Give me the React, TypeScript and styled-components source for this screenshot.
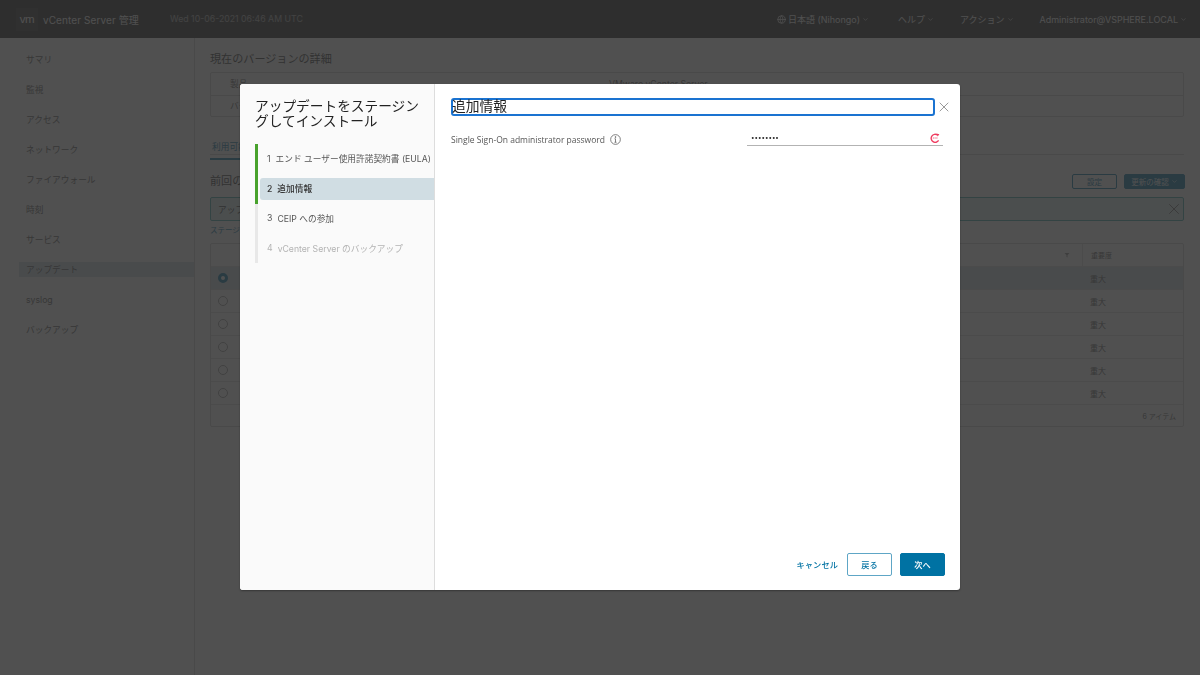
import React from "react";
import styled, { createGlobalStyle } from "styled-components";
import { ChevronDown, Globe, X } from "lucide-react";

const sans = `"Inter", "Noto Sans CJK JP", "Liberation Sans", sans-serif`;
const blue = "#0072a3";

const GlobalStyle = createGlobalStyle`
	html, body {
		margin: 0;
		height: 100%;
		overflow: hidden;
		background: #fafafa;
		font-family: ${sans};
	}
`;

const Page = styled.div`
	display: flex;
	flex-direction: column;
	height: 675px;
`;

const TopBar = styled.header`
	flex: 0 0 38px;
	display: flex;
	align-items: center;
	background: #1f1f1f;
	color: #fafafa;
	padding: 0 13px 0 16px;
`;

const Logo = styled.div`
	width: 22px;
	height: 23px;
	display: grid;
	place-items: center;
	background: #2c2c2c;
	font: 400 11.5px "Liberation Sans", sans-serif;
	letter-spacing: -0.3px;
`;

const Product = styled.div`
	margin-left: 5px;
	font-size: 10px;
	letter-spacing: 0.1px;
	width: 127px;
	white-space: nowrap;
`;

const DateText = styled.div`
	font-size: 8.75px;
	opacity: 0.6;
	white-space: nowrap;
`;

const TopNav = styled.nav`
	margin-left: auto;
	display: flex;
	align-items: center;
`;

const TopNavItem = styled.div<{ $gap: number }>`
	display: flex;
	align-items: center;
	gap: 2px;
	margin-left: ${(p) => p.$gap}px;
	font-size: 9px;
	white-space: nowrap;
`;

const Body = styled.div`
	flex: 1;
	display: flex;
	min-height: 0;
`;

const Sidebar = styled.aside`
	flex: 0 0 195px;
	box-sizing: border-box;
	padding: 14px 0 0 19px;
	border-right: 1px solid #ccc;
	display: flex;
	flex-direction: column;
	gap: 15px;
`;

const SideItem = styled.div<{ $active?: boolean }>`
	height: 15px;
	line-height: 17px;
	padding-left: 7px;
	font-size: 8.7px;
	color: #565656;
	background: ${(p) => (p.$active ? "#d0dde5" : "transparent")};
`;

const Main = styled.main`
	flex: 1;
	padding: 14px 16px 0 15px;
	color: #565656;
	min-width: 0;
`;

const SectionTitle = styled.h2`
	margin: 0;
	font-size: 11.1px;
	line-height: 15px;
	font-weight: 400;
	color: #333;
`;

const VersionBox = styled.div`
	margin-top: 5px;
	border: 1px solid #ccc;
	border-radius: 2px;
	background: #fff;
`;

const VersionRow = styled.div`
	display: flex;
	height: 21.5px;
	box-sizing: border-box;
	align-items: center;
	padding-left: 19px;
	font-size: 8.7px;
	& + & {
		border-top: 1px solid #ccc;
	}
	& > span:first-child {
		width: 379px;
	}
`;

const Tabs = styled.div`
	margin-top: 17px;
	height: 21px;
	box-sizing: border-box;
	border-bottom: 1px solid #ccc;
`;

const Tab = styled.div`
	display: inline-block;
	height: 21px;
	box-sizing: border-box;
	padding: 0 2px;
	line-height: 17px;
	border-bottom: 2px solid ${blue};
	font-size: 8.7px;
	color: ${blue};
`;

const SectionHead = styled.div`
	margin-top: 19px;
	display: flex;
	align-items: center;
	justify-content: space-between;
	height: 15px;
`;

const HeadButtons = styled.div`
	display: flex;
	gap: 7px;
	margin-right: -1px;
`;

const SmallButton = styled.div<{ $solid?: boolean }>`
	height: 15px;
	box-sizing: border-box;
	display: flex;
	align-items: center;
	justify-content: center;
	gap: 2px;
	width: ${(p) => (p.$solid ? "61px" : "45px")};
	border: 1px solid ${blue};
	border-radius: 2px;
	font-size: 7.5px;
	background: ${(p) => (p.$solid ? blue : "transparent")};
	color: ${(p) => (p.$solid ? "#fff" : blue)};
`;

const Alert = styled.div`
	margin-top: 8px;
	height: 24px;
	box-sizing: border-box;
	display: flex;
	align-items: center;
	justify-content: space-between;
	padding: 0 0 0 7px;
	border: 1px solid #3fa7a7;
	border-radius: 2px;
	background: #dff0f0;
	font-size: 8.7px;
	color: #333;
`;

const StageLink = styled.div`
	margin-top: 4px;
	height: 12px;
	line-height: 12px;
	font-size: 7.5px;
	color: ${blue};
`;

const Grid = styled.div`
	margin-top: 6px;
	border: 1px solid #ccc;
	border-radius: 2px;
	background: #fff;
`;

const GridRow = styled.div<{ $selected?: boolean }>`
	display: flex;
	align-items: center;
	height: 23px;
	box-sizing: border-box;
	padding-left: 7px;
	font-size: 8px;
	background: ${(p) => (p.$selected ? "#d0dde5" : "transparent")};
	border-top: 1px solid #ddd;
`;

const GridHead = styled.div`
	display: flex;
	align-items: center;
	justify-content: flex-end;
	height: 22px;
	font-size: 7px;
`;

const FilterMark = styled.svg`
	margin-right: 12px;
`;

const ColumnRule = styled.span`
	width: 1px;
	height: 22px;
	background: #ddd;
	margin-right: 8px;
`;

const Radio = styled.span<{ $on?: boolean }>`
	width: 10px;
	height: 10px;
	box-sizing: border-box;
	border-radius: 50%;
	border: ${(p) => (p.$on ? `3px solid ${blue}` : "1px solid #999")};
	background: #fff;
`;

const Severity = styled.span`
	margin-left: auto;
	width: 93px;
	flex: none;
`;

const HeadSeverity = styled.span`
	width: 92px;
	flex: none;
`;

const GridFoot = styled.div`
	height: 22px;
	box-sizing: border-box;
	border-top: 1px solid #ddd;
	display: flex;
	align-items: center;
	justify-content: flex-end;
	padding-right: 7px;
	font-size: 7px;
`;

const Overlay = styled.div`
	position: fixed;
	inset: 0;
	background: rgba(49, 49, 49, 0.85);
	display: flex;
	justify-content: center;
	padding-top: 84px;
`;

const Modal = styled.div`
	width: 720px;
	height: 506px;
	display: flex;
	background: #fff;
	border-radius: 3px;
	overflow: hidden;
	box-shadow: 0 1px 2px rgba(0, 0, 0, 0.35);
`;

const WizardNav = styled.div`
	flex: 0 0 195px;
	box-sizing: border-box;
	padding: 15px 0 0 15px;
	background: #fafafa;
	border-right: 1px solid #ddd;
`;

const WizardTitle = styled.h1`
	margin: 0;
	font-size: 13.7px;
	line-height: 15px;
	font-weight: 400;
	color: #222;
	width: 170px;
`;

const Steps = styled.ol`
	list-style: none;
	margin: 15px 0 0;
	padding: 0;
	width: 179px;
`;

const Step = styled.li<{ $bar: string }>`
	height: 29.75px;
	display: flex;
	align-items: center;
	border-left: 3px solid ${(p) => p.$bar};
	padding-left: 2px;
	box-sizing: border-box;
`;

const StepLabel = styled.div<{ $active?: boolean; $disabled?: boolean }>`
	flex: 1;
	height: 22px;
	display: flex;
	align-items: center;
	gap: 5px;
	padding-left: 7px;
	font-size: 8.7px;
	white-space: nowrap;
	border-radius: 3px 0 0 3px;
	background: ${(p) => (p.$active ? "#d0dde3" : "transparent")};
	color: ${(p) => (p.$active ? "#333" : p.$disabled ? "#b3b3b3" : "#565656")};
	font-weight: ${(p) => (p.$active ? 500 : 400)};
`;

const Content = styled.div`
	flex: 1;
	display: flex;
	flex-direction: column;
	padding: 13px 15px 14px 16px;
	min-width: 0;
`;

const HeadRow = styled.div`
	display: flex;
	align-items: center;
`;

const StepHeading = styled.h3`
	margin: 0;
	flex: 1;
	height: 18px;
	box-sizing: border-box;
	border: 2px solid #1a73d1;
	border-radius: 3px;
	font-size: 13.75px;
	line-height: 13px;
	font-weight: 400;
	color: #222;
	text-indent: -1px;
`;

const CloseButton = styled.div`
	flex: none;
	width: 18px;
	height: 18px;
	margin-right: -7.5px;
	display: grid;
	place-items: center;
	padding-top: 1px;
	color: #808080;
`;

const FieldRow = styled.div`
	margin-top: 14px;
	display: flex;
	align-items: flex-start;
`;

const FieldLabel = styled.label`
	width: 296px;
	display: flex;
	align-items: center;
	gap: 5px;
	margin-top: 4px;
	font-family: "Open Sans", sans-serif;
	font-size: 8.5px;
	color: #565656;
	white-space: nowrap;
`;

const PasswordField = styled.div`
	flex: 1;
	height: 16px;
	margin-right: 2px;
	box-sizing: border-box;
	display: flex;
	align-items: center;
	justify-content: space-between;
	padding: 0 3px 0 4px;
	border-bottom: 1px solid #b3b3b3;
	font-size: 6.2px;
	color: #333;
`;

const Footer = styled.div`
	margin-top: auto;
	display: flex;
	align-items: center;
	justify-content: flex-end;
`;

const FlatButton = styled.div`
	font-size: 8.2px;
	font-weight: 500;
	letter-spacing: 0.1px;
	color: ${blue};
	margin-right: 9px;
	padding-bottom: 1px;
`;

const ActionButton = styled.div<{ $solid?: boolean }>`
	width: 45px;
	height: 23px;
	box-sizing: border-box;
	display: grid;
	place-items: center;
	padding-bottom: 2px;
	border-radius: 2px;
	border: 1px solid ${(p) => (p.$solid ? blue : "#5ea6c6")};
	background: ${(p) => (p.$solid ? blue : "#fff")};
	color: ${(p) => (p.$solid ? "#fff" : blue)};
	font-size: 8.2px;
	font-weight: 500;
	margin-left: ${(p) => (p.$solid ? "8px" : "0")};
`;

const InfoIcon = () => (
	<svg width="11" height="11" viewBox="0 0 12 12" fill="none" stroke="#666" strokeWidth="0.9">
		<circle cx="6" cy="6" r="5.3" />
		<path d="M6 5.2V9M4.9 9h2.2M4.9 5.2H6" />
		<circle cx="6" cy="3.3" r="0.5" fill="#666" />
	</svg>
);

const KeyIcon = () => (
	<svg width="10" height="10" viewBox="0 0 10 10" fill="none">
		<path d="M8.6 7.4A4 4 0 1 1 7.4 2" stroke="#ef3b5f" strokeWidth="1.4" />
		<path d="M6.4 0.4 9.4 1.2 7.6 3.6Z" fill="#ef3b5f" />
		<path d="M2.8 5h4.6" stroke="#ef3b5f" strokeWidth="1" strokeDasharray="1 0.8" />
	</svg>
);

const sideItems = ["サマリ", "監視", "アクセス", "ネットワーク", "ファイアウォール", "時刻", "サービス", "アップデート", "syslog", "バックアップ"];
const rows = [0, 1, 2, 3, 4, 5];
const steps = [
	{ label: "エンド ユーザー使用許諾契約書 (EULA)", bar: "#48a22c" },
	{ label: "追加情報", bar: "#48a22c", active: true },
	{ label: "CEIP への参加", bar: "#e8e8e8" },
	{ label: "vCenter Server のバックアップ", bar: "#e8e8e8", disabled: true },
];

const App: React.FC = () => {
	return (
		<>
			<GlobalStyle />
			<Page>
				<TopBar>
					<Logo>vm</Logo>
					<Product>vCenter Server 管理</Product>
					<DateText>Wed 10-06-2021 06:46 AM UTC</DateText>
					<TopNav>
						<TopNavItem $gap={0}>
							<Globe size={9} />
							日本語 (Nihongo)
							<ChevronDown size={7} />
						</TopNavItem>
						<TopNavItem $gap={29}>
							ヘルプ
							<ChevronDown size={7} />
						</TopNavItem>
						<TopNavItem $gap={26}>
							アクション
							<ChevronDown size={7} />
						</TopNavItem>
						<TopNavItem $gap={26}>
							Administrator@VSPHERE.LOCAL
							<ChevronDown size={7} />
						</TopNavItem>
					</TopNav>
				</TopBar>
				<Body>
					<Sidebar>
						{sideItems.map((item) => (
							<SideItem key={item} $active={item === "アップデート"}>
								{item}
							</SideItem>
						))}
					</Sidebar>
					<Main>
						<SectionTitle>現在のバージョンの詳細</SectionTitle>
						<VersionBox>
							<VersionRow>
								<span>製品</span>
								<span>VMware vCenter Server</span>
							</VersionRow>
							<VersionRow>
								<span>バージョン</span>
							</VersionRow>
						</VersionBox>
						<Tabs>
							<Tab>利用可能</Tab>
						</Tabs>
						<SectionHead>
							<SectionTitle>前回の確認</SectionTitle>
							<HeadButtons>
								<SmallButton>設定</SmallButton>
								<SmallButton $solid>
									更新の確認
									<ChevronDown size={7} />
								</SmallButton>
							</HeadButtons>
						</SectionHead>
						<Alert>
							アップデート
							<X size={18} strokeWidth={1.2} color="#666" />
						</Alert>
						<StageLink>ステージ</StageLink>
						<Grid>
							<GridHead>
								<FilterMark width="6" height="6" viewBox="0 0 6 6">
									<path d="M0.5 1h5L3.5 3.2V5.5L2.5 5V3.2Z" fill="#888" />
								</FilterMark>
								<ColumnRule />
								<HeadSeverity>重要度</HeadSeverity>
							</GridHead>
							{rows.map((row) => (
								<GridRow key={row} $selected={row === 0}>
									<Radio $on={row === 0} />
									<Severity>重大</Severity>
								</GridRow>
							))}
							<GridFoot>6 アイテム</GridFoot>
						</Grid>
					</Main>
				</Body>
			</Page>
			<Overlay>
				<Modal>
					<WizardNav>
						<WizardTitle>アップデートをステージングしてインストール</WizardTitle>
						<Steps>
							{steps.map((step, i) => (
								<Step key={step.label} $bar={step.bar}>
									<StepLabel $active={step.active} $disabled={step.disabled}>
										<span>{i + 1}</span>
										<span>{step.label}</span>
									</StepLabel>
								</Step>
							))}
						</Steps>
					</WizardNav>
					<Content>
						<HeadRow>
							<StepHeading>追加情報</StepHeading>
							<CloseButton>
								<X size={16} strokeWidth={1.2} />
							</CloseButton>
						</HeadRow>
						<FieldRow>
							<FieldLabel>
								Single Sign-On administrator password
								<InfoIcon />
							</FieldLabel>
							<PasswordField>
								<span>••••••••</span>
								<KeyIcon />
							</PasswordField>
						</FieldRow>
						<Footer>
							<FlatButton>キャンセル</FlatButton>
							<ActionButton>戻る</ActionButton>
							<ActionButton $solid>次へ</ActionButton>
						</Footer>
					</Content>
				</Modal>
			</Overlay>
		</>
	);
};

export default App;
